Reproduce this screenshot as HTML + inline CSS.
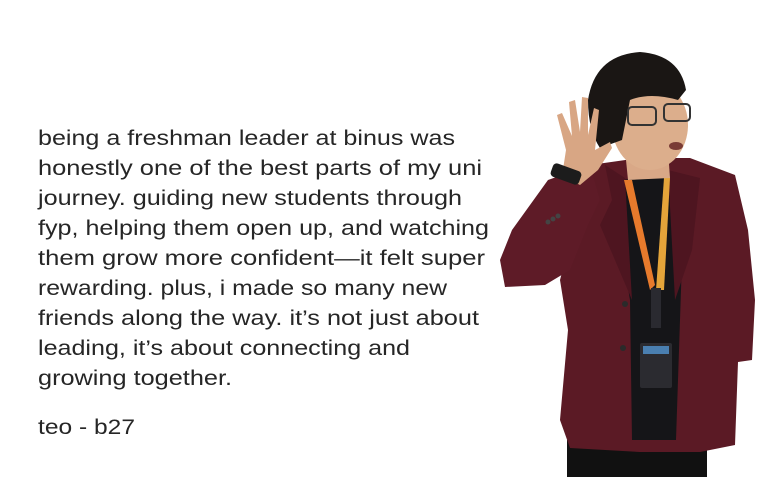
<!DOCTYPE html>
<html><head><style>
html,body{margin:0;padding:0;background:#fff;width:759px;height:477px;overflow:hidden}
svg{display:block}
text{font-family:"Liberation Sans",sans-serif;font-size:21px;fill:#262626}
</style></head><body>
<svg width="759" height="477" viewBox="0 0 759 477">
<g>
<text x="38" y="145" textLength="417" lengthAdjust="spacingAndGlyphs">being a freshman leader at binus was</text>
<text x="38" y="175" textLength="444" lengthAdjust="spacingAndGlyphs">honestly one of the best parts of my uni</text>
<text x="38" y="205" textLength="424" lengthAdjust="spacingAndGlyphs">journey. guiding new students through</text>
<text x="38" y="235" textLength="451" lengthAdjust="spacingAndGlyphs">fyp, helping them open up, and watching</text>
<text x="38" y="265" textLength="447" lengthAdjust="spacingAndGlyphs">them grow more confident—it felt super</text>
<text x="38" y="295" textLength="409" lengthAdjust="spacingAndGlyphs">rewarding. plus, i made so many new</text>
<text x="38" y="325" textLength="441" lengthAdjust="spacingAndGlyphs">friends along the way. it’s not just about</text>
<text x="38" y="355" textLength="372" lengthAdjust="spacingAndGlyphs">leading, it’s about connecting and</text>
<text x="38" y="385" textLength="194" lengthAdjust="spacingAndGlyphs">growing together.</text>
<text x="38" y="434" textLength="97" lengthAdjust="spacingAndGlyphs">teo - b27</text>
</g>
<rect x="567" y="440" width="140" height="37" fill="#111"/>
<path d="M590 165 L640 158 L690 158 L735 175 L748 230 L755 300 L752 360 L738 362 L735 445 L700 452 L640 452 L570 448 L560 420 L568 330 L560 280 Z" fill="#5b1a25"/>
<path d="M548 180 L590 165 L600 200 L588 225 L570 270 L545 285 L505 287 L500 260 L512 230 Z" fill="#5e1b27"/>
<path d="M620 180 L670 176 L682 260 L676 440 L632 440 L630 300 L620 240 Z" fill="#151518"/>
<path d="M605 165 L625 178 L632 300 L600 225 L612 200 Z" fill="#4e1520"/>
<path d="M668 170 L700 178 L692 250 L675 300 Z" fill="#4e1520"/>
<path d="M624 180 L632 180 L655 285 L650 290 Z" fill="#e77a2c"/>
<path d="M664 178 L670 178 L664 290 L656 290 Z" fill="#e4a43a"/>
<rect x="651" y="288" width="10" height="40" fill="#2a2a30"/>
<rect x="640" y="343" width="32" height="45" rx="2" fill="#2b2b30"/>
<rect x="643" y="346" width="26" height="8" fill="#4a7fb0"/>
<path d="M625 150 L668 150 L670 178 L628 180 Z" fill="#d9a887"/>
<ellipse cx="650" cy="125" rx="38" ry="45" fill="#dcae8c"/>
<path d="M588 100 Q595 55 640 52 Q680 55 686 90 L678 100 Q650 92 630 100 L622 140 L600 148 Q588 130 588 100 Z" fill="#1a1614"/>
<rect x="628" y="107" width="28" height="18" rx="4" fill="none" stroke="#333" stroke-width="2"/>
<rect x="664" y="104" width="26" height="17" rx="4" fill="none" stroke="#333" stroke-width="2"/>
<ellipse cx="676" cy="146" rx="7" ry="4" fill="#7a3b35"/>
<path d="M562 176 L566 150 L557 115 L562 113 L572 136 L569 102 L575 100 L580 132 L582 97 L588 98 L588 135 L594 108 L599 110 L595 150 L610 142 L612 148 L598 170 L580 185 Z" fill="#d8a684"/>
<rect x="551" y="167" width="30" height="14" rx="4" fill="#1c1c1c" transform="rotate(20 566 174)"/>
<circle cx="625" cy="304" r="3" fill="#2a2a2a"/>
<circle cx="623" cy="348" r="3" fill="#2a2a2a"/>
<circle cx="548" cy="222" r="2.5" fill="#444"/><circle cx="553" cy="219" r="2.5" fill="#444"/><circle cx="558" cy="216" r="2.5" fill="#444"/>
</svg>
</body></html>
